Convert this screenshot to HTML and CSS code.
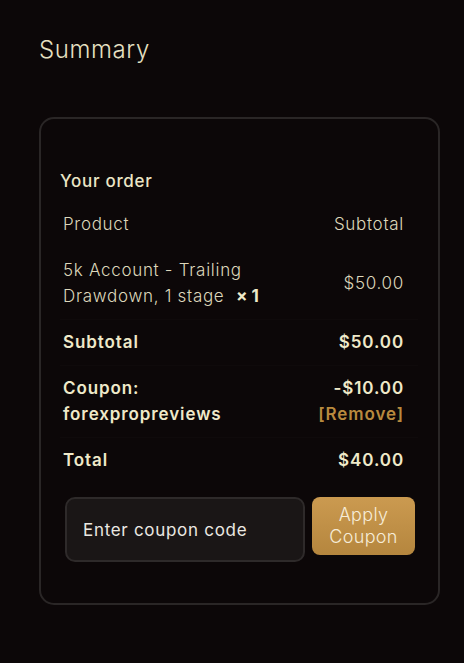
FILE: index.html
```html
<!DOCTYPE html>
<html lang="en">
<head>
    <meta charset="UTF-8">
    <title>Summary</title>
    <link rel="stylesheet" href="styles.css">
</head>
<body>
    <div class="summary">
        <h2 class="title">Summary</h2>
        <div class="card">
            <h3 class="order-title">Your order</h3>
            <div class="order-table">
                <div class="row head">
                    <span>Product</span>
                    <span>Subtotal</span>
                </div>
                <div class="row item">
                    <span class="product">5k Account - Trailing Drawdown, 1 stage <strong class="qty">&times;&thinsp;1</strong></span>
                    <span>$50.00</span>
                </div>
                <div class="row bold">
                    <span>Subtotal</span>
                    <span>$50.00</span>
                </div>
                <div class="row bold">
                    <span>Coupon:<br>forexpropreviews</span>
                    <span class="right">-$10.00<br><a href="#" class="remove">[Remove]</a></span>
                </div>
                <div class="row bold">
                    <span>Total</span>
                    <span>$40.00</span>
                </div>
            </div>
            <form class="coupon">
                <input type="text" class="coupon-input" placeholder="Enter coupon code">
                <button type="button" class="coupon-btn">Apply Coupon</button>
            </form>
        </div>
    </div>
</body>
</html>
```

FILE: styles.css
```css
* {
    margin: 0;
    padding: 0;
    box-sizing: border-box;
}

body {
    background: #0c0708;
    font-family: 'Inter', 'Noto Sans', sans-serif;
    color: #ebe5c5;
}

.summary {
    padding: 35px 25px 0 39px;
}

.title {
    font-size: 24px;
    font-weight: 300;
    letter-spacing: 0.6px;
    line-height: 30px;
    color: #e6e0c2;
}

.card {
    margin-top: 52px;
    width: 401px;
    border: 2px solid #2a2626;
    border-radius: 15px;
    padding: 50px 20px 41px 19px;
}

.order-title {
    font-size: 17px;
    font-weight: 500;
    letter-spacing: 0.7px;
    line-height: 24px;
    margin-bottom: 8px;
}

.row {
    display: flex;
    justify-content: space-between;
    align-items: center;
    padding: 10px 14px 10px 3px;
    font-size: 17px;
    letter-spacing: 0.7px;
    line-height: 26px;
    font-weight: 300;
    color: #ddd7bb;
}

.row.bold {
    padding-top: 9px;
    font-weight: 600;
    letter-spacing: 0.9px;
    color: #efe9c9;
    border-top: 1px solid #0f0a0b;
}

.product {
    max-width: 215px;
}

.qty {
    font-weight: 700;
    margin-left: 6px;
    white-space: nowrap;
    color: #efe9c9;
}

.right {
    text-align: right;
}

.remove {
    color: #b98a3e;
    text-decoration: none;
}

.coupon {
    display: flex;
    align-items: flex-start;
    gap: 7px;
    margin-top: 14px;
    padding-left: 5px;
}

.coupon-input {
    width: 240px;
    height: 65px;
    background: #1a1616;
    border: 2px solid #2e2a2a;
    border-radius: 10px;
    padding: 0 16px;
    font-family: inherit;
    font-size: 17px;
    letter-spacing: 0.7px;
    color: #e8e6e0;
    outline: none;
}

.coupon-input::placeholder {
    color: #ebe8e2;
}

.coupon-btn {
    width: 103px;
    height: 58px;
    border: none;
    border-radius: 8px;
    background: linear-gradient(180deg, #cb9a50, #b5863e);
    color: #f6ecd8;
    font-family: inherit;
    font-size: 18px;
    font-weight: 300;
    letter-spacing: 0.3px;
    line-height: 22px;
    cursor: pointer;
}
```
